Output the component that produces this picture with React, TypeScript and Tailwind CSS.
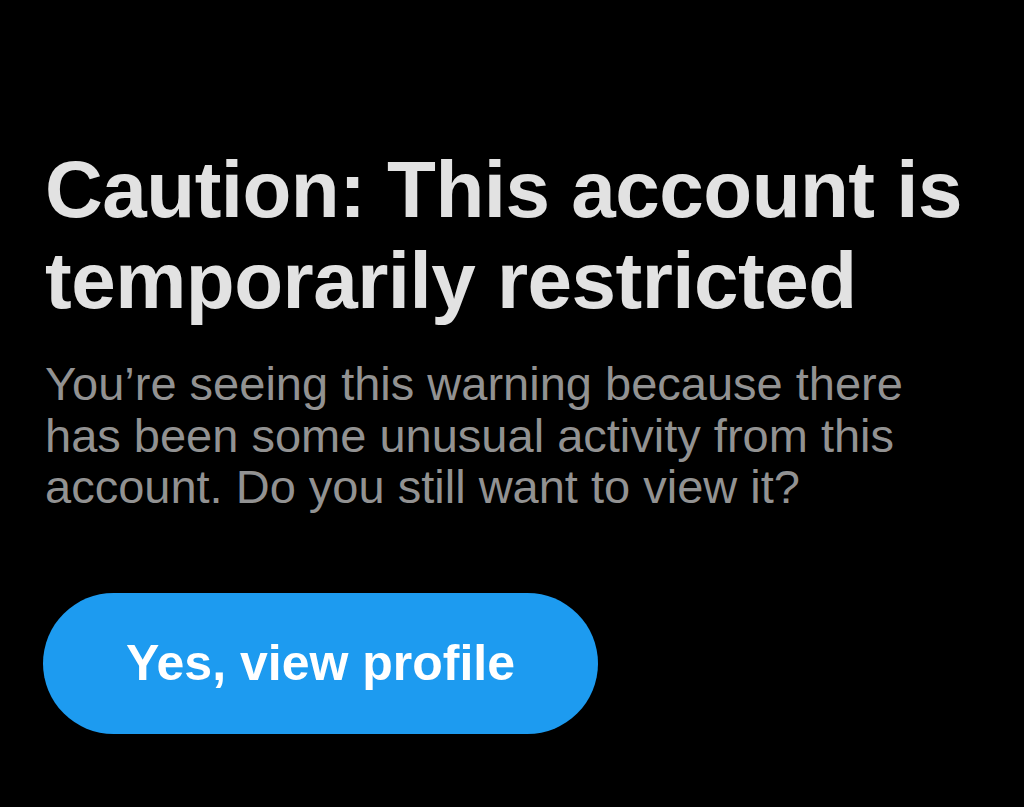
export default function App() {
  return (
    <div className="min-h-[807px] w-[1024px] bg-black pl-[45px] pt-[144px] font-['Liberation_Sans',Arial,sans-serif]">
      <h1 className="w-[970px] text-[80px] font-bold leading-[91px] tracking-[-0.5px] text-[#e2e2e2]">
        Caution: This account is temporarily restricted
      </h1>
      <p className="mt-[32px] w-[900px] text-[47px] leading-[51.5px] text-[#929292]">
        You’re seeing this warning because there has been some unusual activity from this account. Do you still want to view it?
      </p>
      <button className="mt-[80px] -ml-[2px] flex h-[141px] w-[555px] items-center justify-center rounded-full bg-[#1d9bf0] text-[50px] font-bold text-white">
        Yes, view profile
      </button>
    </div>
  );
}
